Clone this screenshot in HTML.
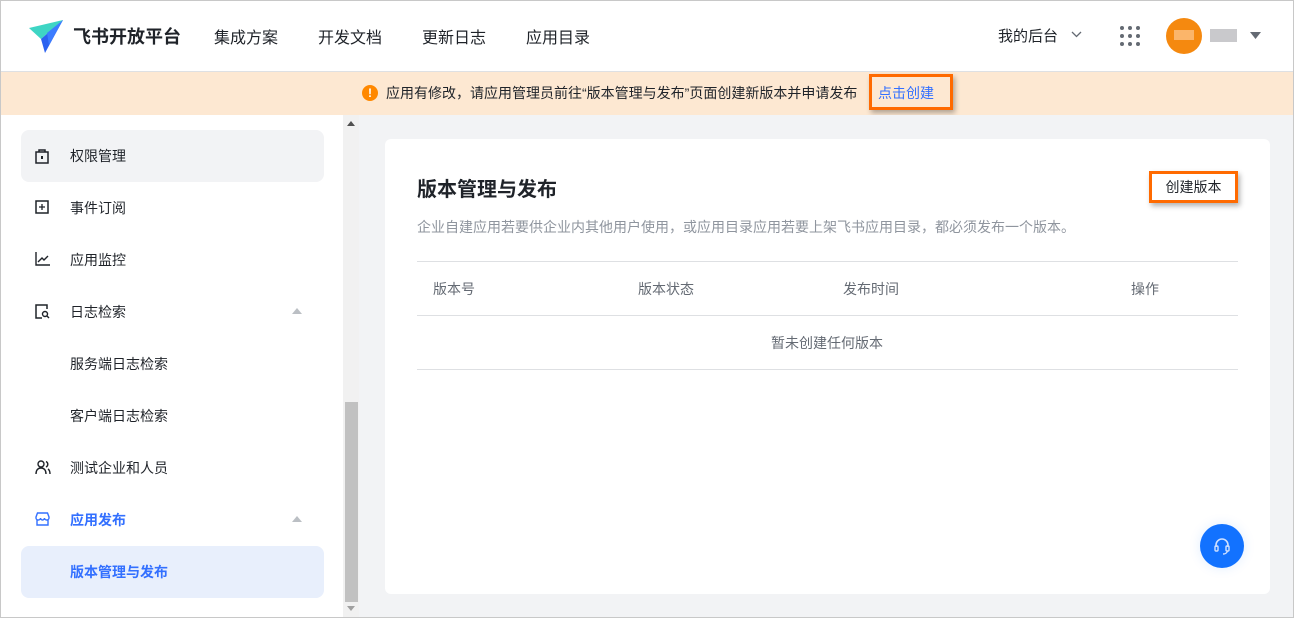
<!DOCTYPE html>
<html><head><meta charset="utf-8"><style>
*{box-sizing:border-box;margin:0;padding:0}
body{width:1294px;height:618px;overflow:hidden;font-family:"Liberation Sans","Noto Sans CJK SC",sans-serif;color:#1f2329;background:#fff;position:relative}
.frame{position:absolute;left:0;top:0;width:1294px;height:618px;border:1px solid #c8c8c8;pointer-events:none;z-index:10}
.hdr{position:absolute;left:0;top:0;width:1294px;height:72px;border-bottom:1px solid #dee0e3;background:#fff}
.hdr .t{position:absolute;top:24px;font-size:16px}
.ban{position:absolute;left:0;top:72px;width:1294px;height:43px;background:#fde8d2;font-size:14px}
.side{position:absolute;left:0;top:115px;width:343px;height:503px;background:#fff}
.it{position:absolute;left:21px;width:303px;height:52px;border-radius:8px;font-size:14px}
.it span{position:absolute;left:49px;top:16px}
.it svg{position:absolute;left:14px;top:18px}
.tri{position:absolute;left:271px;top:22px;width:0;height:0;border-left:5px solid transparent;border-right:5px solid transparent;border-bottom:6px solid #bbbfc4}
.sb{position:absolute;left:343px;top:115px;width:16px;height:503px;background:#f1f1f1}
.main{position:absolute;left:359px;top:115px;width:935px;height:503px;background:#f2f3f5}
.card{position:absolute;left:385px;top:139px;width:885px;height:455px;background:#fff;border-radius:6px}
.c{position:absolute;font-size:14px;color:#646a73}
.ln{position:absolute;left:417px;width:821px;height:1px;background:#dee0e3}
</style></head><body>
<div class="hdr">
<svg style="position:absolute;left:27px;top:17px" width="38" height="38" viewBox="0 0 38 38"><path d="M2 11 L36 3 L14 22Z" fill="#3ed5c4"/><path d="M36 3 L14 22 L18 36Z" fill="#2b62f0"/><path d="M36 3 L20 16 L22 28Z" fill="#3b7cff"/></svg>
<div class="t" style="left:73px;font-size:18px;font-weight:bold;top:23px;color:#1f2329">飞书开放平台</div>
<div class="t" style="left:214px">集成方案</div>
<div class="t" style="left:318px">开发文档</div>
<div class="t" style="left:422px">更新日志</div>
<div class="t" style="left:526px">应用目录</div>
<div class="t" style="left:998px;font-size:15px;top:25px">我的后台</div>
<svg style="position:absolute;left:1071px;top:31px" width="11" height="8"><path d="M1 1 L5.5 5.5 L10 1" stroke="#646a73" fill="none" stroke-width="1.3"/></svg>
<svg style="position:absolute;left:1119px;top:25px" width="22" height="22"><g fill="#646a73"><circle cx="3" cy="3" r="2"/><circle cx="11" cy="3" r="2"/><circle cx="19" cy="3" r="2"/><circle cx="3" cy="11" r="2"/><circle cx="11" cy="11" r="2"/><circle cx="19" cy="11" r="2"/><circle cx="3" cy="19" r="2"/><circle cx="11" cy="19" r="2"/><circle cx="19" cy="19" r="2"/></g></svg>
<div style="position:absolute;left:1166px;top:18px;width:36px;height:36px;border-radius:50%;background:#f5890f"><div style="position:absolute;left:8px;top:12px;width:20px;height:10px;background:#fbb56a"></div></div>
<div style="position:absolute;left:1210px;top:29px;width:27px;height:13px;background:#c9c9cc"></div>
<svg style="position:absolute;left:1250px;top:32px" width="11" height="7"><path d="M0 0 H11 L5.5 7Z" fill="#646a73"/></svg>
</div>
<div class="ban">
<div style="position:absolute;left:362px;top:13px;width:16px;height:16px;border-radius:50%;background:#ff8800;color:#fff;font-size:12px;font-weight:bold;text-align:center;line-height:16px">!</div>
<div style="position:absolute;left:386px;top:11px">应用有修改，请应用管理员前往“版本管理与发布”页面创建新版本并申请发布</div>
<div style="position:absolute;left:869px;top:2px;width:84px;height:36px;border:3px solid #ff6a00;box-shadow:2px 3px 5px rgba(0,0,0,.3)"></div>
<div style="position:absolute;left:878px;top:11px;color:#3370ff">点击创建</div>
</div>
<div class="side">
<div class="it" style="top:15px;background:#f2f3f5"><svg width="14" height="16" viewBox="0 0 14 16"><rect x="1" y="4" width="12" height="11" fill="none" stroke="#1f2329" stroke-width="1.5"/><path d="M4 4 V2 H10 V4" fill="none" stroke="#1f2329" stroke-width="1.5"/><rect x="6" y="8" width="2" height="3" fill="#1f2329"/></svg><span>权限管理</span></div>
<div class="it" style="top:67px"><svg width="14" height="14"><rect x="1" y="1" width="12" height="12" fill="none" stroke="#1f2329" stroke-width="1.5"/><path d="M7 4V10M4 7H10" stroke="#1f2329" stroke-width="1.3"/></svg><span>事件订阅</span></div>
<div class="it" style="top:119px"><svg width="15" height="14"><path d="M1 0V13H15M3 10L7 6L9 8L13 4" fill="none" stroke="#1f2329" stroke-width="1.4"/></svg><span>应用监控</span></div>
<div class="it" style="top:171px"><svg width="15" height="15"><path d="M12 5V1H1V14H7" fill="none" stroke="#1f2329" stroke-width="1.5"/><circle cx="10" cy="10" r="2.5" fill="none" stroke="#1f2329" stroke-width="1.4"/><path d="M12 12L14 14" stroke="#1f2329" stroke-width="1.4"/></svg><span>日志检索</span><div class="tri"></div></div>
<div class="it" style="top:223px"><span>服务端日志检索</span></div>
<div class="it" style="top:275px"><span>客户端日志检索</span></div>
<div class="it" style="top:327px"><svg width="16" height="14"><circle cx="6" cy="4" r="3" fill="none" stroke="#1f2329" stroke-width="1.4"/><path d="M1 14C1 10 3 8 6 8C9 8 11 10 11 14M11 1.5A3 3 0 0 1 11 7M13 9C14.5 10 15 12 15 14" fill="none" stroke="#1f2329" stroke-width="1.4"/></svg><span>测试企业和人员</span></div>
<div class="it" style="top:379px;color:#3370ff;font-weight:bold"><svg width="15" height="14"><path d="M1 5L2.5 1H12.5L14 5V6C14 7 13 8 11.7 8C10.5 8 9.5 7 9.5 6C9.5 7 8.5 8 7.5 8C6.5 8 5.5 7 5.5 6C5.5 7 4.5 8 3.2 8C2 8 1 7 1 6ZM2 8V13H13V8" fill="none" stroke="#3370ff" stroke-width="1.4"/></svg><span>应用发布</span><div class="tri"></div></div>
<div class="it" style="top:431px;background:#e8effc;color:#3370ff;font-weight:bold"><span>版本管理与发布</span></div>
</div>
<div class="sb">
<svg style="position:absolute;left:4px;top:6px" width="8" height="5"><path d="M0 5H8L4 0Z" fill="#505050"/></svg>
<div style="position:absolute;left:2px;top:287px;width:13px;height:200px;background:#c1c1c1"></div>
<svg style="position:absolute;left:4px;top:491px" width="8" height="5"><path d="M0 0H8L4 5Z" fill="#a0a0a0"/></svg>
</div>
<div class="main"></div>
<div class="card"></div>
<div style="position:absolute;left:417px;top:173px;font-size:20px;font-weight:bold">版本管理与发布</div>
<div class="c" style="left:417px;top:217px;color:#8f959e">企业自建应用若要供企业内其他用户使用，或应用目录应用若要上架飞书应用目录，都必须发布一个版本。</div>
<div style="position:absolute;left:1149px;top:171px;width:89px;height:32px;border:3px solid #ff6a00;background:#fff;box-shadow:2px 3px 5px rgba(0,0,0,.3);font-size:14px;text-align:center;line-height:26px">创建版本</div>
<div class="ln" style="top:261px"></div>
<div class="c" style="left:433px;top:279px">版本号</div>
<div class="c" style="left:638px;top:279px">版本状态</div>
<div class="c" style="left:843px;top:279px">发布时间</div>
<div class="c" style="left:1131px;top:279px">操作</div>
<div class="ln" style="top:315px"></div>
<div class="c" style="left:771px;top:333px">暂未创建任何版本</div>
<div class="ln" style="top:369px"></div>
<div style="position:absolute;left:1200px;top:524px;width:44px;height:44px;border-radius:50%;background:#1272ff;box-shadow:0 0 12px rgba(18,114,255,.12)"><svg style="position:absolute;left:12px;top:12px" width="20" height="20" viewBox="0 0 20 20"><path d="M4 11V9A6 6 0 0 1 16 9V11" fill="none" stroke="#cfe0ff" stroke-width="1.6"/><rect x="3" y="10" width="3" height="5" rx="1" fill="none" stroke="#cfe0ff" stroke-width="1.4"/><rect x="14" y="10" width="3" height="5" rx="1" fill="none" stroke="#cfe0ff" stroke-width="1.4"/><path d="M15.5 15C15 17 13 18 11 18" fill="none" stroke="#cfe0ff" stroke-width="1.4"/></svg></div>
<div class="frame"></div>
</body></html>
